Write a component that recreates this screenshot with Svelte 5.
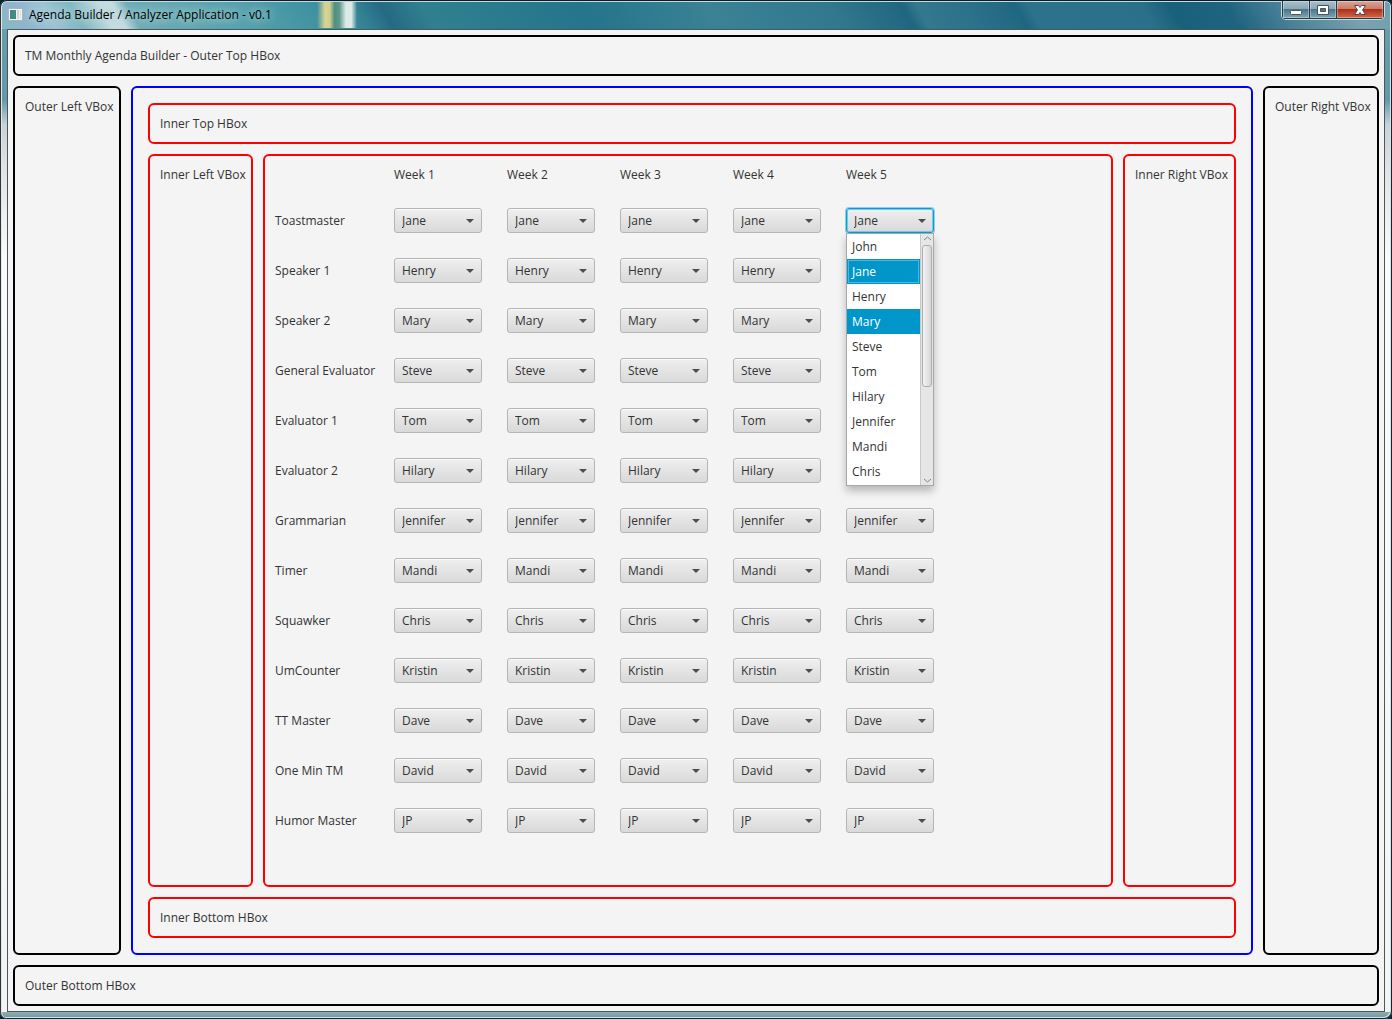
<script>
  const weeks = ['Week 1', 'Week 2', 'Week 3', 'Week 4', 'Week 5'];
  const people = [
    'John', 'Jane', 'Henry', 'Mary', 'Steve', 'Tom', 'Hilary',
    'Jennifer', 'Mandi', 'Chris', 'Kristin', 'Dave', 'David', 'JP'
  ];
  const roles = [
    ['Toastmaster', 'Jane'],
    ['Speaker 1', 'Henry'],
    ['Speaker 2', 'Mary'],
    ['General Evaluator', 'Steve'],
    ['Evaluator 1', 'Tom'],
    ['Evaluator 2', 'Hilary'],
    ['Grammarian', 'Jennifer'],
    ['Timer', 'Mandi'],
    ['Squawker', 'Chris'],
    ['UmCounter', 'Kristin'],
    ['TT Master', 'Dave'],
    ['One Min TM', 'David'],
    ['Humor Master', 'JP']
  ];
  const visible = people.slice(0, 10);
  const hovered = 'Mary';

  let agenda = $state(roles.map(([, person]) => weeks.map(() => person)));
  let open = $state(true);

  function choose(person) {
    agenda[0][4] = person;
    open = false;
  }
</script>

<div class="window">
  <header class="titlebar">
    <svg class="app-icon" width="15" height="13" viewBox="0 0 15 13" aria-hidden="true">
      <rect x="0.5" y="0.5" width="14" height="12" fill="#f4f4f4" stroke="#a9b3b8" />
      <rect x="2" y="2" width="6" height="9" fill="#3f8f80" />
      <rect x="2" y="2" width="2" height="9" fill="#4c7f9c" />
      <rect x="9" y="2" width="2" height="9" fill="#d3d6d6" />
      <rect x="12" y="2" width="1" height="9" fill="#dde0e0" />
    </svg>
    <h1>Agenda Builder / Analyzer Application - v0.1</h1>
    <div class="controls">
      <button class="min" aria-label="Minimize">
        <svg width="14" height="14" viewBox="0 0 14 14"><rect x="1.5" y="7.5" width="11" height="4" rx="1" fill="#fff" stroke="#4b5266" /></svg>
      </button>
      <button class="max" aria-label="Maximize">
        <svg width="14" height="14" viewBox="0 0 14 14"><path fill="#fff" fill-rule="evenodd" stroke="#4b5266" d="M1.5 2.500h11v9h-11zM4.500 5.500v3h5v-3z" /></svg>
      </button>
      <button class="close" aria-label="Close">
        <svg width="14" height="14" viewBox="0 0 14 14"><path fill="#fff" stroke="#56454f" stroke-linejoin="round" d="M1.500 2.500h4L7 4.500l1.500-2h4L9.500 7l3 4.500h-4L7 9.500l-1.500 2h-4L4.500 7z" /></svg>
      </button>
    </div>
  </header>

  <main class="client">
    <section class="box">TM Monthly Agenda Builder - Outer Top HBox</section>
    <div class="middle">
      <aside class="box outer-left">Outer Left VBox</aside>
      <div class="box inner">
        <section class="box red">Inner Top HBox</section>
        <div class="middle">
          <aside class="box red inner-left">Inner Left VBox</aside>
          <section class="box red schedule">
            <table>
              <thead>
                <tr>
                  <td></td>
                  {#each weeks as week}
                    <th scope="col">{week}</th>
                  {/each}
                </tr>
              </thead>
              <tbody>
                {#each roles as [role], r}
                  <tr>
                    <th scope="row">{role}</th>
                    {#each weeks as week, w}
                      <td>
                        <div class="combo" class:focused={open && r === 0 && w === 4}>
                          <select aria-label="{role}, {week}" bind:value={agenda[r][w]}>
                            {#each people as person}
                              <option>{person}</option>
                            {/each}
                          </select>
                          <svg class="arrow" width="8" height="4" viewBox="0 0 8 4" aria-hidden="true"><path d="M0 0h8L4 4z" fill="#4d4d4d" /></svg>
                          {#if open && r === 0 && w === 4}
                            <div class="popup">
                              <ul role="listbox" aria-label="{role}, {week} choices">
                                {#each visible as person}
                                  <li role="option" aria-selected={person === agenda[0][4]}>
                                    <button
                                      class:selected={person === agenda[0][4]}
                                      class:hovered={person === hovered}
                                      onclick={() => choose(person)}>{person}</button>
                                  </li>
                                {/each}
                              </ul>
                              <div class="scrollbar" aria-hidden="true">
                                <svg width="9" height="5" viewBox="0 0 9 5"><path d="M1 4l3.500-3L8 4" fill="none" stroke="#858585" /></svg>
                                <div class="track"><div class="thumb"></div></div>
                                <svg width="9" height="5" viewBox="0 0 9 5"><path d="M1 1l3.500 3L8 1" fill="none" stroke="#858585" /></svg>
                              </div>
                            </div>
                          {/if}
                        </div>
                      </td>
                    {/each}
                  </tr>
                {/each}
              </tbody>
            </table>
          </section>
          <aside class="box red inner-right">Inner Right VBox</aside>
        </div>
        <section class="box red">Inner Bottom HBox</section>
      </div>
      <aside class="box outer-right">Outer Right VBox</aside>
    </div>
    <section class="box">Outer Bottom HBox</section>
  </main>
</div>

<style>
  :global(body) {
    background: #06222c;
  }

  .window,
  .window * {
    box-sizing: border-box;
  }

  .window {
    display: flex;
    flex-direction: column;
    min-height: 100vh;
    padding: 0 7px 7px;
    border-radius: 7px;
    font: 12px/17px 'Open Sans', 'Noto Sans', sans-serif;
    color: #333;
    box-shadow:
      inset 0 1px #0a1c26,
      inset 1px 0 #2f3437,
      inset -1px -1px #12262e,
      inset 0 2px #c4dde3,
      inset 2px 0 #dfe9ec,
      inset -2px -2px #d5e3e7;
    background:
      linear-gradient(#8fadb5, #6f929b) bottom / 100% 7px no-repeat,
      linear-gradient(
          60deg,
          #86b9c2 0%,
          #8fb4cd 2%,
          #9fc3d4 4%,
          #7fb7c0 6%,
          #c5dbe0 8%,
          #c5dbe0 9%,
          #6eacb6 10%,
          #55a0ac 18%,
          #3f929f 23%,
          #348495 26%,
          #256a83 28%,
          #31808f 31%,
          #25748a 42%,
          #3a8294 51%,
          #31788d 60%,
          #1f667f 65%,
          #33788d 66%,
          #2a7088 70%,
          #1f6780 73%,
          #2d728b 74%,
          #2a7089 82%,
          #19607a 84%,
          #1e647e 88%,
          #4a8298 92%,
          #7ba2b0 97%,
          #709eac 100%
        )
        top / 100% 29px no-repeat,
      linear-gradient(#6c9faa 0, #619aaa 100px, #c9d2da 125px, #e6e6e9 180px, #fbfbfb 260px, #f4f4f4 100%);
  }

  .titlebar {
    display: flex;
    align-items: center;
    gap: 6px;
    height: 29px;
    flex: none;
    background:
      linear-gradient(90deg, transparent, #d8d492 20%, #cfcf90 32%, #4f8f80 44%, #5d9a8c 56%, #dce9e6 72%, #dce9e6 86%, transparent)
      310px 2px / 40px 26px no-repeat;
  }

  .app-icon {
    margin-left: 1px;
  }

  h1 {
    flex: 1;
    margin: 0;
    font-size: 12px;
    line-height: 17px;
    font-weight: 400;
    color: #000;
    text-shadow:
      0 0 8px #b4d8de,
      0 0 10px #b4d8de;
  }

  .controls {
    display: flex;
    align-self: flex-start;
    margin-top: 1px;
    border: 1px solid #c9dbe0;
    border-top: 0;
    border-radius: 0 0 5px 5px;
    overflow: hidden;
  }

  .controls button {
    display: flex;
    align-items: center;
    justify-content: center;
    width: 27px;
    height: 18px;
    padding: 0;
    border: 1px solid #243c48;
    border-top: 0;
    border-right: 0;
    background: linear-gradient(#a9c0ca, #8aa9b5 45%, #4b7688 50%, #7fa7b4);
    box-shadow: inset 0 0 0 1px #ffffff55;
  }

  .controls svg {
    flex: none;
  }

  .controls .close {
    width: 48px;
    border-right: 1px solid #243c48;
    background: linear-gradient(#dba598, #cc7c6b 45%, #ae2f17 50%, #cf6a4a);
  }

  .client {
    flex: 1;
    display: flex;
    flex-direction: column;
    gap: 10px;
    padding: 5px;
    border: 1px solid #4a5659;
    background: #f4f4f4;
  }

  .middle {
    flex: 1;
    display: flex;
    gap: 10px;
  }

  .box {
    padding: 10px;
    border: 2px solid #000;
    border-radius: 6px;
    white-space: nowrap;
  }

  .red {
    border-color: #f00;
  }

  .inner {
    flex: 1;
    display: flex;
    flex-direction: column;
    gap: 10px;
    padding: 15px;
    border-color: #00f;
  }

  .outer-left {
    width: 108px;
  }

  .outer-right {
    width: 116px;
  }

  .inner-left {
    width: 105px;
  }

  .inner-right {
    width: 113px;
  }

  .schedule {
    flex: 1;
  }

  table {
    border-collapse: collapse;
  }

  th,
  td {
    padding: 0 25px 25px 0;
    text-align: left;
    font-weight: 400;
    vertical-align: middle;
  }

  th[scope='row'] {
    min-width: 119px;
    padding-right: 10px;
  }

  .combo {
    position: relative;
    width: 88px;
    height: 25px;
  }

  select {
    appearance: none;
    display: block;
    width: 100%;
    height: 25px;
    margin: 0;
    padding: 0 20px 0 7px;
    border: 1px solid #b5b5b5;
    border-radius: 3px;
    outline: 0;
    background: linear-gradient(#efefef, #d9d9d9);
    box-shadow: inset 0 1px #fafafa;
    font: inherit;
    color: #333;
  }

  .focused select {
    border-color: #039ed3;
    box-shadow:
      0 0 0 1px #8fd0e8,
      inset 0 0 0 1px #7cc8e4;
  }

  .arrow {
    position: absolute;
    right: 8px;
    top: 11px;
    pointer-events: none;
  }

  .popup {
    position: absolute;
    z-index: 1;
    top: 25px;
    left: 0;
    display: flex;
    width: 88px;
    border: 1px solid #a8a8a8;
    background: #fff;
    box-shadow: 0 5px 8px #00000040;
  }

  ul {
    flex: 1;
    margin: 0;
    padding: 0 0 1px;
    list-style: none;
  }

  li button {
    display: block;
    width: 100%;
    height: 25px;
    padding: 0 5px;
    border: 0;
    background: none;
    font: inherit;
    color: #333;
    text-align: left;
  }

  li .selected,
  li .hovered {
    background: #0096c9;
    color: #fff;
  }

  li .selected {
    box-shadow:
      inset 0 0 0 1px #0096c9,
      inset 0 0 0 2px #4db6db;
  }

  .scrollbar {
    display: flex;
    flex-direction: column;
    align-items: center;
    gap: 4px;
    width: 13px;
    padding: 2px 1px;
    border-left: 1px solid #c8c8c8;
    background: #e6e6e6;
  }

  .track {
    flex: 1;
    width: 10px;
  }

  .thumb {
    height: 62%;
    border: 1px solid #adadad;
    border-radius: 3px;
    background: linear-gradient(90deg, #f3f3f3, #d6d6d6);
  }
</style>
